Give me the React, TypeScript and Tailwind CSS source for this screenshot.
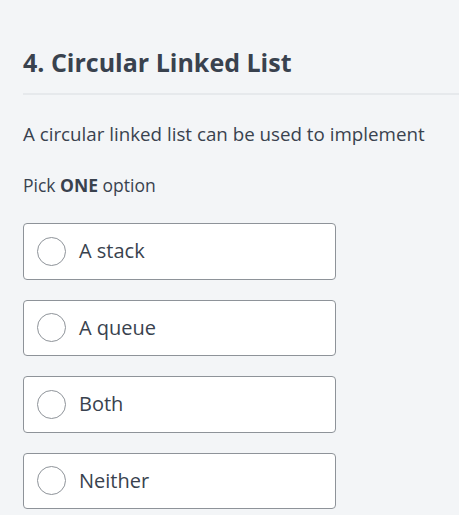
import React from "react";

const options = ["A stack", "A queue", "Both", "Neither"];

export default function App() {
  return (
    <div
      className="min-h-[515px] w-full bg-[#f3f5f7] text-[#39424e]"
      style={{ fontFamily: '"Open Sans", sans-serif' }}
    >
      <div className="pt-[46px]">
        <h2 className="px-[23px] text-[25px] font-bold leading-[32px] text-[#39424e]">
          4. Circular Linked List
        </h2>
        <div className="ml-[23px] mt-[15px] h-[2px] bg-[#e6e9ec]" />
        <div className="px-[23px]">
          <p className="mt-[26px] text-[18.75px] leading-[26px]">
            A circular linked list can be used to implement
          </p>
          <p className="mt-[26px] text-[17.5px] leading-[24px]">
            Pick <span className="font-bold">ONE</span> option
          </p>
          <div className="mt-[26px] flex flex-col gap-[20px]">
            {options.map((o) => (
              <div
                key={o}
                className="flex h-[56.5px] w-[313px] items-center rounded-[4px] border border-[#8e9399] bg-white pl-[13px]"
              >
                <span className="h-[29px] w-[29px] shrink-0 rounded-full border border-[#8e9399]" />
                <span className="ml-[13px] text-[20px] leading-[26px] text-[#39424e]">{o}</span>
              </div>
            ))}
          </div>
        </div>
      </div>
    </div>
  );
}
